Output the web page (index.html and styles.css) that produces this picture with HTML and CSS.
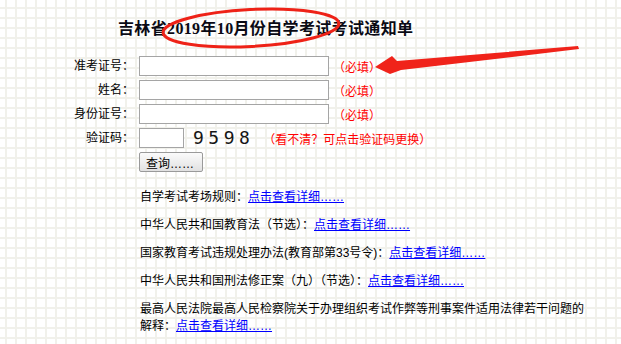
FILE: index.html
```html
<!DOCTYPE html>
<html lang="zh-CN">
<head>
  <meta charset="UTF-8" />
  <meta name="viewport" content="width=device-width, initial-scale=1.0" />
  <title>吉林省2019年10月份自学考试考试通知单</title>
  <link rel="stylesheet" href="styles.css">
</head>
<body>
  <div class="page">
    <h1 class="title">吉林省2019年10月份自学考试考试通知单</h1>

    <form class="query" onsubmit="return false;">
      <label>准考证号：</label>
      <div class="field"><input type="text" class="box" /><span class="must">（必填）</span></div>

      <label>姓名：</label>
      <div class="field"><input type="text" class="box" /><span class="must">（必填）</span></div>

      <label>身份证号：</label>
      <div class="field"><input type="text" class="box" /><span class="must">（必填）</span></div>

      <label>验证码：</label>
      <div class="field">
        <input type="text" class="box code" />
        <span class="captcha">9598</span>
        <span class="must">（看不清？可点击验证码更换）</span>
      </div>

      <span></span>
      <div class="field"><button type="button" class="btn">查询……</button></div>
    </form>

    <div class="rules">
      <p>自学考试考场规则：<a href="#">点击查看详细……</a></p>
      <p>中华人民共和国教育法（节选）：<a href="#">点击查看详细……</a></p>
      <p>国家教育考试违规处理办法(教育部第33号令)：<a href="#">点击查看详细……</a></p>
      <p>中华人民共和国刑法修正案（九）（节选）：<a href="#">点击查看详细……</a></p>
      <p>最高人民法院最高人民检察院关于办理组织考试作弊等刑事案件适用法律若干问题的<br>解释：<a href="#">点击查看详细……</a></p>
    </div>

    <!-- red marks drawn over the page -->
    <svg class="marks" width="621" height="344" viewBox="0 0 621 344">
      <ellipse cx="251" cy="28" rx="88" ry="18.5" transform="rotate(-3 251 28)" fill="none" stroke="#ee2217" stroke-width="3" />
      <polygon points="375,67 392,56 397,61 578,46 579,49 401,70 390,74" fill="#f0231a" />
    </svg>
  </div>
</body>
</html>
```

FILE: styles.css
```css
body {
  margin: 0;
  background-color: #fff;
  background-image:
    linear-gradient(#f1f1eb 2px, transparent 2px),
    linear-gradient(90deg, #f1f1eb 2px, transparent 2px);
  background-size: 10px 10px;
  background-position: 5px 7px;
  font-family: "Liberation Sans", "Noto Sans CJK SC", sans-serif;
  font-size: 12px;
  color: #000;
}
.page {
  position: relative;
  width: 621px;
  height: 344px;
  overflow: hidden;
}
.title {
  margin: 0;
  padding: 19px 0 0 118px;
  font-family: "Liberation Serif", "Noto Sans CJK SC", serif;
  font-size: 16px;
  line-height: 20px;
  font-weight: bold;
  letter-spacing: 0.35px;
  color: #0a0a14;
}
.query {
  display: grid;
  grid-template-columns: 72px auto;
  column-gap: 5px;
  row-gap: 4px;
  margin: 17px 0 0 62px;
}
.query label {
  text-align: right;
  line-height: 20px;
}
.field {
  display: flex;
  align-items: center;
  height: 20px;
}
.box {
  width: 190px;
  height: 20px;
  margin: 0;
  padding: 0 2px;
  border: 1px solid #a5a5a5;
  box-sizing: border-box;
  background: #fff;
  font-size: 12px;
}
.box.code {
  width: 45px;
}
.captcha {
  margin: 0 9px 0 9px;
  font-family: "DejaVu Sans Mono", monospace;
  font-size: 18px;
  letter-spacing: 4.5px;
  line-height: 20px;
  color: #151515;
}
.must {
  color: #ff0000;
  margin-left: 4px;
}
.captcha + .must {
  margin-left: 0;
}
.btn {
  width: 64px;
  height: 20px;
  margin: 0;
  padding: 0 0 0 6px;
  text-align: left;
  font-family: "Liberation Sans", "Noto Sans CJK SC", sans-serif;
  font-size: 12px;
  border: 1px solid #9a9a9a;
  border-radius: 2px;
  background: linear-gradient(#fbfbfb, #e1e1e1);
  color: #000;
}
.rules {
  width: 450px;
  margin: 17px 0 0 140px;
}
.rules p {
  margin: 0 0 11px;
  line-height: 17px;
}
.rules a {
  color: #0000ff;
}
.marks {
  position: absolute;
  left: 0;
  top: 0;
  pointer-events: none;
}
```
